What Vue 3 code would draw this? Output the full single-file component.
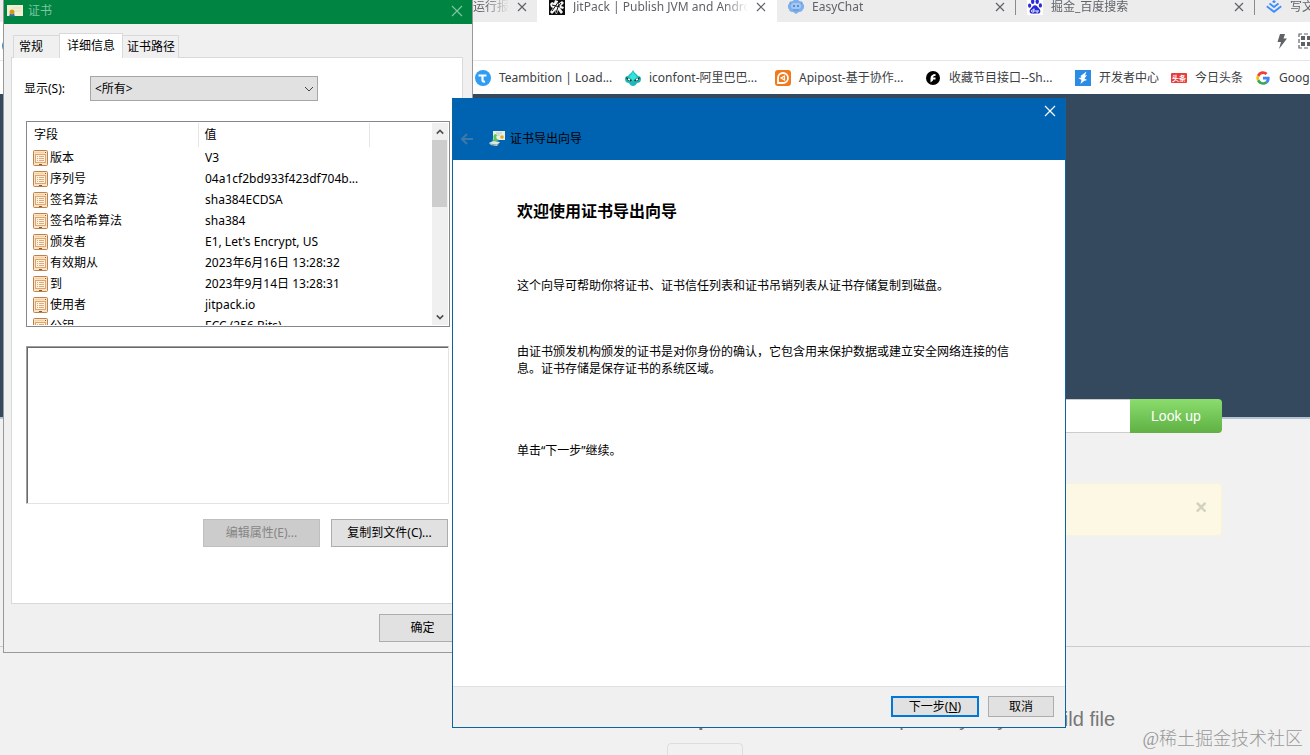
<template>
  <div class="desktop">
    <!-- Browser -->
    <div class="browser">
      <div class="tab-strip">
        <div v-for="tab in tabs" :key="tab.title" class="tab" :class="[tab.kind, { active: tab.active }]">
          <svg v-if="tab.icon === 'jitpack'" class="icon" viewBox="0 0 16 16">
            <rect width="16" height="16" fill="#0c0c0c" />
            <path d="M1 5l2-2 2 1 1-3 3 1v3l4-3 2 2-3 3 3 1-1 2-3-1 3 4-2 2-3-4-1 4-2-1 1-3-4 4-2-2 3-4-2-1z" fill="#f4f4f4" />
            <path d="M3 12L10 2M7 14l3-9M3 6l8 2M12 4l-3 4" stroke="#111" />
          </svg>
          <svg v-else-if="tab.icon === 'chat'" class="icon" viewBox="0 0 16 16">
            <path d="M5 2l1-2h4l1 2c3 0 4 1 4 3 2 1 2 4 0 5 0 2-2 3-4 3l-3 2-3-2c-3 0-4-1-4-3-2-1-2-4 0-5 0-2 1-3 4-3z" fill="#7fb0ea" />
            <rect x="3" y="4" width="10" height="6" rx="3" fill="#a5c8f3" />
            <circle cx="6" cy="7" r="1" fill="#3b78cc" /><circle cx="10" cy="7" r="1" fill="#3b78cc" />
            <path d="M5 11h6M2 5l1-1M13 4l1 1" stroke="#5b92dc" />
          </svg>
          <svg v-else-if="tab.icon === 'baidu'" class="icon" viewBox="0 0 16 16">
            <rect width="16" height="16" fill="#fff" />
            <g fill="#2a2ad8">
              <ellipse cx="5.7" cy="2.7" rx="1.7" ry="2.4" /><ellipse cx="10.2" cy="2.7" rx="1.7" ry="2.4" />
              <ellipse cx="2.6" cy="6.6" rx="1.6" ry="2.2" /><ellipse cx="13.4" cy="6.4" rx="1.6" ry="2.2" />
              <path d="M8 6.2c2 0 2.400 1.800 4 3.200 2.400 2.200 1.300 5.200-1 5.200-1.500 0-4.500.1-6 0-2.600-.2-3.300-3.200-1-5.200C5.600 8 6 6.200 8 6.200z" />
            </g>
            <path d="M7 9.500v3.500H5.500c-1.500 0-1.500-2 0-2H7M9 11v1.500q0 .6 1 .6h1V11" fill="none" stroke="#fff" />
          </svg>
          <svg v-else-if="tab.icon === 'juejin'" class="icon" viewBox="0 0 16 16">
            <path d="M8 1l2 1.700-2 1.600-2-1.600z" fill="#3b8cff" />
            <path d="M3.500 4.500L8 8l4.500-3.500M.8 7.300L8 12.800l7.200-5.500" fill="none" stroke="#3b8cff" stroke-width="1.800" />
          </svg>
          <span class="tab-title">{{ tab.title }}</span>
          <button v-if="tab.kind !== 'last'" class="tab-close" aria-label="关闭">
            <svg viewBox="0 0 10 10"><path d="M1 1l8 8M9 1L1 9" /></svg>
          </button>
        </div>
      </div>

      <div class="toolbar">
        <svg class="edge-icon" viewBox="0 0 8 38">
          <path d="M8 0A12 12 0 0 0 4 10" fill="none" stroke="#2c9a5b" stroke-width="2" />
          <circle cx="10" cy="24" r="8" fill="#1e8fe0" />
        </svg>
        <svg class="icon" viewBox="0 0 16 16"><path d="M6 1h5L9.500 5.500H13L5 16l2-7H3.500z" fill="#5f6368" /></svg>
        <svg class="icon" viewBox="0 0 16 16">
          <path d="M1 4V1h3M12 1h3v3M1 12v3h3M12 15h3v-3M6 1h4M6 15h4M1 6v4M15 6v4" fill="none" stroke="#5f6368" stroke-width="1.200" />
          <path d="M3 3h4v4H3zM9 3h4v4H9zM3 9h4v4H3zM9 9h4v4H9z" fill="#5f6368" />
        </svg>
      </div>

      <nav class="bookmarks">
        <a v-for="b in bookmarks" :key="b.title" href="#" class="bookmark" :class="{ wide: b.wide }">
          <svg v-if="b.icon === 'teambition'" class="icon" viewBox="0 0 16 16">
            <circle cx="8" cy="8" r="8" fill="#2f9df4" />
            <path d="M3.500 5.500h8M7.500 5.500V10q0 2 2.500 1.500" fill="none" stroke="#fff" stroke-width="2.200" />
          </svg>
          <svg v-else-if="b.icon === 'iconfont'" class="icon" viewBox="0 0 16 16">
            <path d="M8 0c1 3 4 4 5 6 2 0 3 1 3 3 0 3-2 4-4 4-1 2-2 3-4 3s-3-1-4-3c-2 0-4-1-4-4 0-2 1-3 3-3 1-2 4-3 5-6z" fill="#1bb9b9" />
            <path d="M8 1c.5 3 3 4 4 6L8 11 4 7c1-2 3.500-3 4-6z" fill="#2fe6dc" />
            <path d="M1 7l6 3c-1 2-5 2-6-3zM15 7l-6 3c1 2 5 2 6-3z" fill="#233" />
            <path d="M3 9l2 1M13 9l-2 1" stroke="#fff" stroke-width="1.400" />
          </svg>
          <svg v-else-if="b.icon === 'apipost'" class="icon" viewBox="0 0 16 16">
            <rect width="16" height="16" rx="3" fill="#f07a1c" />
            <path d="M3 13V8a5 5 0 1 1 5 5z" fill="none" stroke="#fff" stroke-width="1.800" />
            <path d="M9.500 6v4L6 8z" fill="none" stroke="#fff" stroke-width="1.200" />
          </svg>
          <svg v-else-if="b.icon === 'showdoc'" class="icon" viewBox="0 0 16 16">
            <circle cx="8" cy="8" r="7" fill="#000" />
            <path d="M5.500 12.500V8.500c0-3 2-4.500 5-4.500v2c-2 0-2.500.5-2.500 1.500h2.500v2H8v1z" fill="#fff" />
          </svg>
          <svg v-else-if="b.icon === 'dev'" class="icon" viewBox="0 0 16 16">
            <rect width="16" height="16" fill="#2b8ce6" />
            <path d="M11.500 1.500L5.500 6l1 1.500-3 .500 3 2-1 4 3.500-3 3-1-2.500-1.500L12 5l-2 .500z" fill="#fff" />
          </svg>
          <svg v-else-if="b.icon === 'toutiao'" class="icon" viewBox="0 0 16 16">
            <rect y="3" width="16" height="10" rx="1" fill="#e93b3d" />
            <text x="8" y="11" class="toutiao-text">头条</text>
          </svg>
          <svg v-else class="icon google" viewBox="0 0 48 48">
            <path d="M43.600 20H24v8.500h11.300A12 12 0 0 1 31.500 34l6.500 5.500C42 36 44 30.500 44 24z" fill="#4285f4" />
            <path d="M24 44c5.500 0 10.300-1.800 14-4.500L31.500 34A12 12 0 0 1 12.700 28L6 33.200A20 20 0 0 0 24 44z" fill="#34a853" />
            <path d="M12.700 28a12 12 0 0 1 0-8L6 14.700a20 20 0 0 0 0 18.500z" fill="#fbbc05" />
            <path d="M24 12c3 0 5.800 1.100 7.900 3l5.700-5.700A20 20 0 0 0 6 14.700L12.700 20A12 12 0 0 1 24 12z" fill="#ea4335" />
          </svg>
          <span class="bookmark-title">{{ b.title }}</span>
        </a>
      </nav>

      <main class="page">
        <div class="hero"></div>
        <form class="lookup" @submit.prevent>
          <input v-model="repo" type="text" aria-label="Git repo url" />
          <button type="submit">Look up</button>
        </form>
        <div class="notice"><button aria-label="Close">×</button></div>
        <section class="howto">
          <div class="howto-body">
            <h4><strong>Step 1.</strong> Add the JitPack repository to your build file</h4>
            <button class="build-tab" aria-label="Build tool"></button>
          </div>
        </section>
      </main>
    </div>

    <!-- Certificate window -->
    <div class="cert" role="dialog" aria-labelledby="cert-title">
      <header class="cert-head">
        <svg class="icon" viewBox="0 0 16 16">
          <rect y="2" width="16" height="11" fill="#f3efd2" />
          <path d="M6 5h8M8 8h6" stroke="#e2ddbd" />
          <path d="M3 10l-1 4 2-1 1 1 1-1 2 1-1-4z" fill="#2f6fb8" />
          <circle cx="5" cy="9" r="2.500" fill="#d09a20" />
        </svg>
        <span id="cert-title">证书</span>
        <button aria-label="关闭"><svg viewBox="0 0 12 12"><path d="M1 1l10 10M11 1L1 11" /></svg></button>
      </header>

      <div class="cert-tabs" role="tablist">
        <button
          v-for="t in certTabs"
          :key="t"
          role="tab"
          :aria-selected="t === currentTab"
          :class="{ active: t === currentTab }"
          @click="currentTab = t"
        >{{ t }}</button>
      </div>

      <div class="cert-panel">
        <div class="filter">
          <label for="filter">显示(S):</label>
          <div class="select-wrap">
            <select id="filter"><option>&lt;所有&gt;</option></select>
            <svg viewBox="0 0 10 6"><path d="M1 1l4 4 4-4" /></svg>
          </div>
        </div>

        <div class="list">
          <div class="list-view">
            <table>
              <thead>
                <tr><th class="col-field">字段</th><th class="col-value">值</th><th></th></tr>
              </thead>
              <tbody>
                <tr v-for="row in fields" :key="row.name">
                  <td>
                    <div class="field">
                      <svg class="icon" viewBox="0 0 16 16">
                        <rect x=".5" y=".5" width="14" height="15" rx="1" fill="#fbe3c4" stroke="#b98252" />
                        <path d="M2 2.500h9" stroke="#f6cf9f" />
                        <rect x="2.500" y="4.500" width="10" height="8" fill="#fff3e0" stroke="#dca572" />
                        <path d="M4 6.500h1M6 6.500h5M4 8.500h1M6 8.500h5M4 10.500h1M6 10.500h5" stroke="#dcaa7c" />
                        <path d="M6 14.500h3M12 2.500h1" stroke="#8f5428" />
                      </svg>
                      <span>{{ row.name }}</span>
                    </div>
                  </td>
                  <td class="value" colspan="2">{{ row.value }}</td>
                </tr>
              </tbody>
            </table>
          </div>
          <div class="scrollbar">
            <button aria-label="向上"><svg viewBox="0 0 10 6"><path d="M1 5l4-4 4 4" /></svg></button>
            <div class="track"><div class="thumb"></div></div>
            <button aria-label="向下"><svg viewBox="0 0 10 6"><path d="M1 1l4 4 4-4" /></svg></button>
          </div>
        </div>

        <textarea class="detail" readonly aria-label="值"></textarea>

        <div class="cert-actions">
          <button class="win-btn" disabled>编辑属性(E)...</button>
          <button class="win-btn">复制到文件(C)...</button>
        </div>
      </div>

      <footer class="cert-foot"><button class="win-btn">确定</button></footer>
    </div>

    <!-- Export wizard -->
    <div class="wizard" role="dialog" aria-labelledby="wizard-title">
      <header class="wizard-head">
        <button class="wizard-close" aria-label="关闭"><svg viewBox="0 0 12 12"><path d="M1 1l10 10M11 1L1 11" /></svg></button>
        <div class="wizard-bar">
          <button class="back" aria-label="上一步" disabled>
            <svg viewBox="0 0 12 12"><path d="M12 6H1M6 1L1 6l5 5" /></svg>
          </button>
          <svg class="icon" viewBox="0 0 16 16">
            <rect x="4" y="0" width="12" height="9" fill="#e8efe0" />
            <path d="M7 2h6M7 4h4" stroke="#b9c9c0" />
            <circle cx="13" cy="6" r="1.800" fill="#e3a52a" />
            <path d="M6 3c-2 1-2 4-1 5L3 9l3 2 4-2-2-1c-1-1-1-3 0-4z" fill="#5fc458" />
            <path d="M0 12l4-2 7 1-3 4-6-1z" fill="#dfe6e2" />
            <path d="M1 13l7 1 3-3" fill="none" stroke="#8fa8a0" />
          </svg>
          <span id="wizard-title">证书导出向导</span>
        </div>
      </header>
      <div class="wizard-body">
        <h1>欢迎使用证书导出向导</h1>
        <p>这个向导可帮助你将证书、证书信任列表和证书吊销列表从证书存储复制到磁盘。</p>
        <p>由证书颁发机构颁发的证书是对你身份的确认，它包含用来保护数据或建立安全网络连接的信息。证书存储是保存证书的系统区域。</p>
        <p class="hint">单击“下一步”继续。</p>
      </div>
      <footer class="wizard-foot">
        <button class="win-btn primary">下一步(<u>N</u>)</button>
        <button class="win-btn">取消</button>
      </footer>
    </div>

    <div class="watermark">@稀土掘金技术社区</div>
  </div>
</template>

<script setup>
import { ref } from "vue";

const repo = ref("");
const currentTab = ref("详细信息");
const certTabs = ["常规", "详细信息", "证书路径"];

const tabs = [
  { title: "运行报", kind: "first" },
  { title: "JitPack | Publish JVM and Android", icon: "jitpack", active: true },
  { title: "EasyChat", icon: "chat", kind: "split" },
  { title: "掘金_百度搜索", icon: "baidu", kind: "split" },
  { title: "写文章", icon: "juejin", kind: "last" }
];

const bookmarks = [
  { title: "Teambition | Load...", icon: "teambition", wide: true },
  { title: "iconfont-阿里巴巴...", icon: "iconfont", wide: true },
  { title: "Apipost-基于协作...", icon: "apipost", wide: true },
  { title: "收藏节目接口--Sh...", icon: "showdoc", wide: true },
  { title: "开发者中心", icon: "dev" },
  { title: "今日头条", icon: "toutiao" },
  { title: "Google", icon: "google" }
];

const fields = [
  { name: "版本", value: "V3" },
  { name: "序列号", value: "04a1cf2bd933f423df704b..." },
  { name: "签名算法", value: "sha384ECDSA" },
  { name: "签名哈希算法", value: "sha384" },
  { name: "颁发者", value: "E1, Let's Encrypt, US" },
  { name: "有效期从", value: "2023年6月16日 13:28:32" },
  { name: "到", value: "2023年9月14日 13:28:31" },
  { name: "使用者", value: "jitpack.io" },
  { name: "公钥", value: "ECC (256 Bits)" }
];
</script>

<style>
body {
  overflow: hidden;
}
</style>

<style scoped>
.desktop {
  position: relative;
  height: 100vh;
  overflow: hidden;
  background: #f1f1f1;
  color: #000;
  font: 12px/16px "Noto Sans", "Noto Sans CJK SC", sans-serif;
}

.desktop * {
  box-sizing: border-box;
}

button,
input,
select,
textarea {
  font: inherit;
  color: inherit;
  margin: 0;
  padding: 0;
  border-radius: 0;
}

button {
  border: none;
  background: none;
}

svg {
  display: block;
  flex: none;
}

.icon {
  width: 16px;
  height: 16px;
}

/* browser */
.tab-strip {
  display: flex;
  height: 22px;
  padding-left: 473px;
  background: #ececec;
  color: #5f6368;
  overflow: hidden;
}

.tab {
  display: flex;
  align-items: center;
  flex: none;
  width: 239px;
  gap: 8px;
  padding: 0 11px 8px;
}

.tab.first {
  width: 64px;
  padding-left: 0;
  padding-right: 10px;
}

.tab.active {
  width: 240px;
  padding-left: 12px;
  background: #fff;
}

.tab.split {
  background: linear-gradient(#8a8a8a, #8a8a8a) right top / 1px 15px no-repeat;
}

.tab-title {
  flex: 1;
  overflow: hidden;
  white-space: nowrap;
  mask-image: linear-gradient(to left, transparent, #000 24px);
}

.tab-close svg,
.cert-head button svg,
.wizard-close svg {
  width: 10px;
  height: 10px;
  fill: none;
  stroke: #5f6368;
  stroke-width: 1.2;
}

.toolbar {
  display: flex;
  align-items: center;
  justify-content: flex-end;
  gap: 8px;
  height: 39px;
  margin-right: -4px;
  background: #fff;
  border-bottom: 1px solid #e6e6e6;
}

.edge-icon {
  width: 8px;
  height: 38px;
  margin-right: auto;
}

.bookmarks {
  display: flex;
  align-items: center;
  gap: 12px;
  height: 33px;
  padding-left: 475px;
  background: #fff;
}

.bookmark {
  display: flex;
  align-items: center;
  flex: none;
  gap: 8px;
  color: #3c4043;
  text-decoration: none;
}

.bookmark.wide {
  width: 138px;
}

.bookmark-title {
  white-space: nowrap;
}

.toutiao-text {
  fill: #fff;
  font-size: 7px;
  font-weight: bold;
  text-anchor: middle;
}

.hero {
  height: 325px;
  background: #34495e;
  border-bottom: 2px solid #b4c4d4;
}

.lookup {
  position: relative;
  display: flex;
  height: 34px;
  margin: -20px 88px 0;
  font: 14px/20px "Liberation Sans", Arial, sans-serif;
}

.lookup input {
  flex: 1;
  border: 1px solid #ccc;
  border-right: none;
  border-radius: 4px 0 0 4px;
  background: #fff;
}

.lookup button {
  width: 92px;
  color: #fff;
  border-radius: 0 4px 4px 0;
  background: linear-gradient(#8add6d, #60b044);
}

.notice {
  display: flex;
  align-items: center;
  justify-content: flex-end;
  height: 53px;
  margin: 50px 88px 0;
  padding: 0 14px 6px;
  border: 1px solid #fbf3d9;
  border-radius: 4px;
  background: #fcf8e3;
}

.notice button {
  color: #d3d0be;
  font: bold 20px/20px "Liberation Sans", Arial, sans-serif;
}

.howto {
  display: grid;
  grid-template-columns: 1fr 1fr;
  gap: 24px;
  margin-top: 110px;
  padding: 62px 88px 0;
  border-top: 1px solid #ccc;
}

.howto-body {
  grid-column: 2;
}

.howto h4 {
  margin: 0 0 14px;
  color: #777;
  font: 20px/20px "Liberation Sans", Arial, sans-serif;
  white-space: nowrap;
}

.build-tab {
  width: 76px;
  height: 36px;
  border: 1px solid #ddd;
  border-radius: 4px 4px 0 0;
}

/* shared dialog button */
.win-btn {
  height: 28px;
  border: 1px solid #adadad;
  background: #e1e1e1;
  text-align: center;
}

.win-btn:disabled {
  border-color: #bfbfbf;
  background: #ccc;
  color: #868686;
}

/* certificate window */
.cert {
  position: absolute;
  top: 0;
  left: 3px;
  width: 470px;
  border: 1px solid #999;
  border-top: none;
  background: #f0f0f0;
}

.cert-head {
  display: flex;
  align-items: center;
  gap: 5px;
  height: 24px;
  padding: 0 9px 2px 3px;
  background: #008442;
  color: #7cc6a0;
}

.cert-head button {
  margin-left: auto;
}

.cert-head button svg,
.wizard-close svg {
  width: 12px;
  height: 12px;
  stroke: #7cc6a0;
}

.cert-tabs {
  display: flex;
  align-items: flex-end;
  height: 34px;
  padding-left: 9px;
}

.cert-tabs button {
  height: 23px;
  padding: 0 5px;
  border: 1px solid #d9d9d9;
  border-bottom: none;
  background: #f0f0f0;
}

.cert-tabs button:first-child {
  padding-right: 16px;
}

.cert-tabs button:last-child {
  padding: 0 3px 0 4px;
}

.cert-tabs .active {
  position: relative;
  height: 25px;
  padding: 0 7px;
  margin: 0 -1px;
  background: #fff;
}

.cert-panel {
  margin: -1px 9px 0 7px;
  padding: 18px 13px 56px 14px;
  border: 1px solid #d9d9d9;
  background: #fff;
}

.filter {
  display: flex;
  align-items: center;
  margin-left: -2px;
}

.filter label {
  width: 66px;
}

.select-wrap {
  position: relative;
  width: 228px;
}

.select-wrap select {
  display: block;
  width: 100%;
  height: 25px;
  padding-left: 4px;
  border: 1px solid #a6a6a6;
  background: #e1e1e1;
  appearance: none;
}

.select-wrap svg {
  position: absolute;
  top: 10px;
  right: 4px;
  width: 10px;
  height: 6px;
  fill: none;
  stroke: #444;
}

.list {
  display: flex;
  height: 206px;
  margin-top: 20px;
  margin-right: -1px;
  padding: 1px;
  border: 1px solid #828790;
}

.list-view {
  flex: 1;
  overflow: hidden;
}

table {
  width: 100%;
  border-collapse: collapse;
  table-layout: fixed;
}

th {
  height: 24px;
  padding: 0 6px;
  border-right: 1px solid #e5e5e5;
  font-weight: normal;
  text-align: left;
}

th:last-child {
  border-right: none;
}

.col-field {
  width: 170px;
}

.col-value {
  width: 171px;
}

td {
  height: 21px;
  padding: 0 5px;
}

td.value {
  padding-left: 7px;
  white-space: nowrap;
}

.field {
  display: flex;
  align-items: center;
  gap: 1px;
}

.field span {
  white-space: nowrap;
}

.scrollbar {
  display: flex;
  flex-direction: column;
  width: 16px;
  background: #f0f0f0;
}

.scrollbar button {
  display: grid;
  place-items: center;
  height: 17px;
}

.scrollbar button svg {
  width: 8px;
  height: 6px;
  fill: none;
  stroke: #505050;
  stroke-width: 2;
}

.track {
  flex: 1;
}

.thumb {
  width: 15px;
  height: 67px;
  background: #cdcdcd;
}

.detail {
  display: block;
  width: 100%;
  height: 158px;
  margin-top: 19px;
  border: 1px solid #e3e3e3;
  border-top-color: #a0a0a0;
  border-left-color: #a0a0a0;
  box-shadow: inset 1px 1px #696969;
  background: #fff;
  outline: none;
  resize: none;
}

.cert-actions {
  display: flex;
  justify-content: flex-end;
  gap: 11px;
  margin: 15px 1px 0 0;
}

.cert-actions .win-btn {
  width: 117px;
}

.cert-foot {
  display: flex;
  justify-content: flex-end;
  padding: 10px 6px;
}

.cert-foot .win-btn {
  width: 87px;
}

/* wizard window */
.wizard {
  position: absolute;
  top: 98px;
  left: 452px;
  width: 614px;
  border: 1px solid #0a64a0;
  border-top: none;
  background: #fff;
}

.wizard-head {
  display: flex;
  flex-direction: column;
  height: 62px;
  background: #0063b1;
}

.wizard-close {
  align-self: flex-end;
  padding: 7px 9px;
}

.wizard-close svg {
  stroke: #fff;
}

.wizard-bar {
  display: flex;
  align-items: center;
  gap: 5px;
  margin-top: 7px;
  padding-left: 8px;
}

.back {
  margin-right: 11px;
}

.back svg {
  width: 12px;
  height: 12px;
  fill: none;
  stroke: #3d78ab;
  stroke-width: 2;
}

.wizard-body {
  padding: 39px 48px 0 64px;
  min-height: 526px;
}

.wizard-body h1 {
  margin: 0 0 54px;
  font-size: 16px;
  line-height: 24px;
}

.wizard-body p {
  margin: 0 0 49px;
  line-height: 17px;
}

.wizard-body .hint {
  margin-top: 65px;
}

.wizard-foot {
  display: flex;
  justify-content: flex-end;
  gap: 9px;
  padding: 9px 11px 10px;
  border-top: 1px solid #dfdfdf;
  background: #f0f0f0;
}

.wizard-foot .win-btn {
  width: 66px;
  height: 21px;
  line-height: 17px;
}

.wizard-foot .primary {
  width: 88px;
  border: 2px solid #0078d7;
}

.watermark {
  position: absolute;
  right: 7px;
  bottom: 4px;
  color: #999;
  font: 300 18px/24px "Liberation Serif", "Noto Sans CJK SC", serif;
}
</style>
